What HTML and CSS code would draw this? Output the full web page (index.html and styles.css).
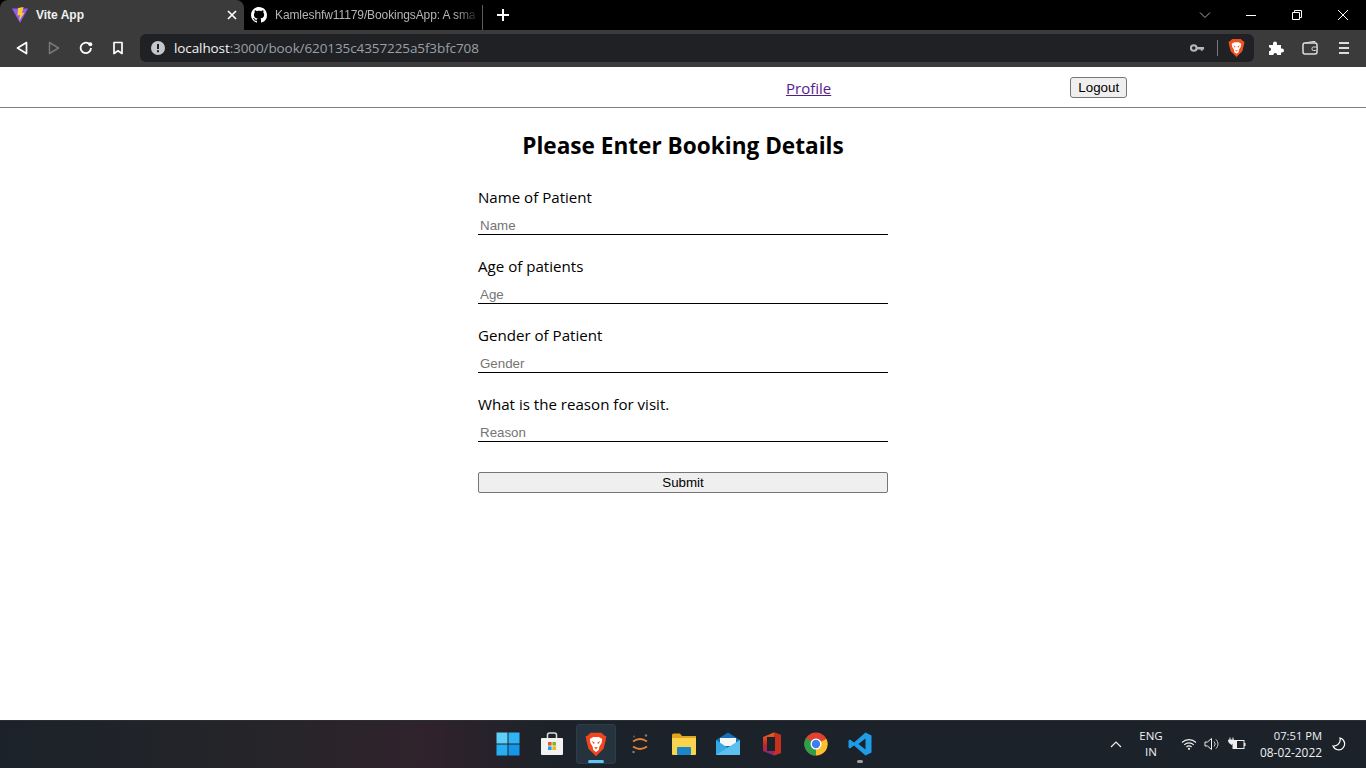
FILE: index.html
```html
<!doctype html>
<html lang="en-US">
  <head>
    <meta charset="utf-8" />
    <title>Vite App</title>
    <link rel="stylesheet" href="styles.css">
  </head>
  <body>
    <div class="tabstrip">
      <div class="tab tab-active">
        <svg class="favicon" viewBox="0 0 16 16"><path d="M0 1.5 L16 1.5 L8 16 Z" fill="#8f5cf5"/><path d="M6 1 L11.5 0 L10 6 L12.5 5.5 L7 14 L8 8 L5.5 8.5 Z" fill="#fdc92e"/></svg>
        <span class="tab-title">Vite App</span>
        <svg class="tab-close" viewBox="0 0 10 10"><path d="M1 1 L9 9 M9 1 L1 9" stroke="#fff" stroke-width="1.7"/></svg>
      </div>
      <div class="tab tab-other">
        <svg class="favicon" viewBox="0 0 16 16"><path fill="#fff" d="M8 0C3.58 0 0 3.58 0 8c0 3.54 2.29 6.53 5.47 7.59.4.07.55-.17.55-.38 0-.19-.01-.82-.01-1.49-2.01.37-2.53-.49-2.69-.94-.09-.23-.48-.94-.82-1.13-.28-.15-.68-.52-.01-.53.63-.01 1.08.58 1.23.82.72 1.21 1.87.87 2.33.66.07-.52.28-.87.51-1.07-1.78-.2-3.64-.89-3.64-3.95 0-.87.31-1.59.82-2.15-.08-.2-.36-1.02.08-2.12 0 0 .67-.21 2.2.82.64-.18 1.32-.27 2-.27s1.36.09 2 .27c1.53-1.04 2.2-.82 2.2-.82.44 1.1.16 1.92.08 2.12.51.56.82 1.27.82 2.15 0 3.07-1.87 3.75-3.65 3.95.29.25.54.73.54 1.48 0 1.07-.01 1.93-.01 2.2 0 .21.15.46.55.38A8 8 0 0 0 16 8c0-4.42-3.58-8-8-8z"/></svg>
        <span class="tab-title tab-title-dim">Kamleshfw11179/BookingsApp: A sma</span>
      </div>
      <svg class="new-tab" viewBox="0 0 14 14"><path d="M7 1 V13 M1 7 H13" stroke="#fff" stroke-width="2"/></svg>
      <div class="window-controls">
        <svg viewBox="0 0 12 12"><path d="M1 3.5 L6 8.5 L11 3.5" fill="none" stroke="#aaa"/></svg>
        <svg viewBox="0 0 12 12"><path d="M1 6.5 H11" stroke="#fff"/></svg>
        <svg viewBox="0 0 12 12"><path d="M1.5 3.5 H8.5 V10.5 H1.5 Z M3.5 3.5 V1.5 H10.5 V8.5 H8.5" fill="none" stroke="#fff"/></svg>
        <svg viewBox="0 0 12 12"><path d="M1 1 L11 11 M11 1 L1 11" stroke="#fff"/></svg>
      </div>
    </div>

    <div class="toolbar">
      <div class="nav-buttons">
        <svg viewBox="0 0 14 14"><path d="M11.5 1.5 L2.5 7 L11.5 12.5 Z" fill="none" stroke="#fff" stroke-width="1.7" stroke-linejoin="round"/></svg>
        <svg viewBox="0 0 14 14"><path d="M2.5 1.5 L11.5 7 L2.5 12.5 Z" fill="none" stroke="#777" stroke-width="1.5" stroke-linejoin="round"/></svg>
        <svg viewBox="0 0 14 14"><path d="M12 7 A5.2 5.2 0 1 1 10 2.8" fill="none" stroke="#fff" stroke-width="1.8"/><circle cx="11.3" cy="3.2" r="2" fill="#fff"/></svg>
        <svg viewBox="0 0 14 14"><path d="M3 1.5 H11 V12.5 L7 9.8 L3 12.5 Z" fill="none" stroke="#fff" stroke-width="1.7" stroke-linejoin="round"/></svg>
      </div>
      <div class="omnibox">
        <svg class="omni-info" viewBox="0 0 14 14"><circle cx="7" cy="7" r="7" fill="#c4c7c9"/><rect x="6" y="3" width="2" height="5" fill="#202124"/><rect x="6" y="9.2" width="2" height="2" fill="#202124"/></svg>
        <span class="url"><span class="url-host">localhost</span>:3000/book/620135c4357225a5f3bfc708</span>
        <svg class="omni-key" viewBox="0 0 16 10"><circle cx="4" cy="5" r="3" fill="none" stroke="#b5b8ba" stroke-width="2.2"/><path d="M7 4 H15 V6.5 H13.5 V8 H11.5 V6.5 H7 Z" fill="#b5b8ba"/></svg>
        <span class="omni-sep"></span>
        <svg class="brave-icon omni-brave" viewBox="0 0 16 18"><path d="M4 0.5 H12 L14 2.5 L15.5 3 L15 6 L13.5 12 L8 17.5 L2.5 12 L1 6 L0.5 3 L2 2.5 Z" fill="#f0501e"/><path d="M3.5 5 L6 3.6 H10 L12.5 5 L12 8 L10.5 10.5 L10 13 L8 14.5 L6 13 L5.5 10.5 L4 8 Z" fill="#fff"/><path d="M4.8 6.5 L7 7.5 L6.5 8.8 Z M11.2 6.5 L9 7.5 L9.5 8.8 Z M6.6 11 H9.4 L8 12.4 Z" fill="#f0501e"/></svg>
      </div>
      <div class="extensions">
        <svg viewBox="0 0 16 16"><path d="M1 5 H5 V3.5 A2 2 0 0 1 9 3.5 V5 H13 V8.5 H14 A2 2 0 0 1 14 12.5 H13 V15 H9 V14 A2 2 0 0 0 5.5 14 V15 H1 V11 H2 A2 2 0 0 0 2 7.5 H1 Z" fill="#fff"/></svg>
        <svg viewBox="0 0 16 16"><rect x="1" y="3" width="14" height="11" rx="2" fill="none" stroke="#ddd" stroke-width="1.5"/><path d="M3 3 L11 1.5 H13 V3" fill="none" stroke="#ddd"/><rect x="10" y="7" width="5" height="3.5" rx="1.5" fill="#3b3b3b" stroke="#ddd"/></svg>
        <svg viewBox="0 0 16 16"><path d="M3 3 H13 M3 8 H13 M3 13 H13" stroke="#ddd" stroke-width="2"/></svg>
      </div>
    </div>

    <header class="site-nav">
      <a class="profile-link" href="#">Profile</a>
      <button class="logout-btn">Logout</button>
    </header>

    <main class="page">
      <h2 class="form-title">Please Enter Booking Details</h2>
      <form class="booking-form">
        <label class="field"><span class="field-label">Name of Patient</span><input class="field-input" placeholder="Name"></label>
        <label class="field"><span class="field-label">Age of patients</span><input class="field-input" placeholder="Age"></label>
        <label class="field"><span class="field-label">Gender of Patient</span><input class="field-input" placeholder="Gender"></label>
        <label class="field"><span class="field-label">What is the reason for visit.</span><input class="field-input" placeholder="Reason"></label>
        <button class="submit-btn" type="button">Submit</button>
      </form>
    </main>

    <footer class="taskbar">
      <div class="task-icons">
        <div class="task-icon">
          <svg viewBox="0 0 24 24"><rect x="0.5" y="0.5" width="11" height="11" fill="#5fd0fb"/><rect x="12.5" y="0.5" width="11" height="11" fill="#2fb5f5"/><rect x="0.5" y="12.5" width="11" height="11" fill="#25aef2"/><rect x="12.5" y="12.5" width="11" height="11" fill="#1596e8"/></svg>
        </div>
        <div class="task-icon">
          <svg viewBox="0 0 24 24"><path d="M7.5 6 V3 A2 2 0 0 1 9.5 1 H14.5 A2 2 0 0 1 16.5 3 V6" fill="none" stroke="#ddd" stroke-width="1.5"/><rect x="1" y="6" width="22" height="17" rx="1" fill="#f2f2f2"/><rect x="8" y="10" width="3.6" height="3.6" fill="#e8532a"/><rect x="12.4" y="10" width="3.6" height="3.6" fill="#7db82b"/><rect x="8" y="14.4" width="3.6" height="3.6" fill="#1f9fe6"/><rect x="12.4" y="14.4" width="3.6" height="3.6" fill="#f7b60f"/></svg>
        </div>
        <div class="task-icon task-icon-active">
          <svg class="brave-icon" viewBox="0 0 16 18"><path d="M4 0.5 H12 L14 2.5 L15.5 3 L15 6 L13.5 12 L8 17.5 L2.5 12 L1 6 L0.5 3 L2 2.5 Z" fill="#f0451e"/><path d="M3.5 5 L6 3.6 H10 L12.5 5 L12 8 L10.5 10.5 L10 13 L8 14.5 L6 13 L5.5 10.5 L4 8 Z" fill="#fff"/><path d="M4.8 6.5 L7 7.5 L6.5 8.8 Z M11.2 6.5 L9 7.5 L9.5 8.8 Z M6.6 11 H9.4 L8 12.4 Z" fill="#f0451e"/></svg>
          <span class="task-pill"></span>
        </div>
        <div class="task-icon">
          <svg viewBox="0 0 24 24"><path d="M5 9.5 Q12 4.5 19 9.5" fill="none" stroke="#e9812f" stroke-width="1.8"/><path d="M5 14.5 Q12 19.5 19 14.5" fill="none" stroke="#e9812f" stroke-width="1.8"/><circle cx="18" cy="3.5" r="1.3" fill="#777"/><circle cx="5.5" cy="20" r="1.3" fill="#777"/><circle cx="6" cy="4.5" r="0.9" fill="#666"/></svg>
        </div>
        <div class="task-icon">
          <svg viewBox="0 0 24 24"><path d="M0 3 A1.5 1.5 0 0 1 1.5 1.5 H8 L10 4 H24 V10 H0 Z" fill="#e3a51c"/><rect x="0" y="6" width="24" height="17" rx="1" fill="#fbd44f"/><rect x="5" y="15" width="14" height="8" rx="1" fill="#1a86c8"/></svg>
        </div>
        <div class="task-icon">
          <svg viewBox="0 0 24 24"><path d="M0 8 L12 0.5 L24 8 V23 H0 Z" fill="#1570b8"/><path d="M4 6 H20 V14 H4 Z" fill="#f4f6f8"/><path d="M0 8 L12 16 L24 8 V23 H0 Z" fill="#35a8e6"/><path d="M24 8 V23 H0 Z" fill="#5cc0ee"/></svg>
        </div>
        <div class="task-icon">
          <svg viewBox="0 0 24 24"><defs><linearGradient id="officeGrad" x1="0" y1="0" x2="0" y2="1"><stop offset="0" stop-color="#e8661e"/><stop offset="0.55" stop-color="#c9222a"/><stop offset="1" stop-color="#7d2a8c"/></linearGradient></defs><path d="M3 5 L14 0.5 L21 3 V21 L14 23.5 L3 19 Z" fill="url(#officeGrad)"/><path d="M14 0.5 L21 3 V21 L14 23.5 Z" fill="#c8301e"/><rect x="7" y="5" width="8" height="14" fill="#1b2229"/></svg>
        </div>
        <div class="task-icon">
          <svg viewBox="0 0 24 24"><circle cx="12" cy="12" r="11.5" fill="#e0422f"/><path d="M12 12 L22.5 7 A11.5 11.5 0 0 1 12 23.5 Z" fill="#fbc02d"/><path d="M12 12 L12 23.5 A11.5 11.5 0 0 1 2 6 Z" fill="#2f9e49"/><circle cx="12" cy="12" r="5.5" fill="#fff"/><circle cx="12" cy="12" r="4.2" fill="#3d80ec"/></svg>
        </div>
        <div class="task-icon">
          <svg viewBox="0 0 24 24"><path d="M17.5 0.5 L23.5 3.5 V20.5 L17.5 23.5 L6 13.5 L2 16.5 L0.5 15.5 V8.5 L2 7.5 L6 10.5 Z M17.5 6.5 L10.5 12 L17.5 17.5 Z" fill="#1f9ce6" fill-rule="evenodd"/></svg>
          <span class="task-dot"></span>
        </div>
      </div>
      <div class="tray">
        <svg class="tray-chevron" viewBox="0 0 12 8"><path d="M1 7 L6 2 L11 7" fill="none" stroke="#eee" stroke-width="1.2"/></svg>
        <div class="tray-lang"><span>ENG</span><span>IN</span></div>
        <svg class="tray-wifi" viewBox="0 0 16 12"><path d="M1 4.5 A10 10 0 0 1 15 4.5 M3.2 6.8 A7 7 0 0 1 12.8 6.8 M5.4 9 A3.6 3.6 0 0 1 10.6 9" fill="none" stroke="#eee" stroke-width="1.1"/><circle cx="8" cy="10.8" r="1.1" fill="#eee"/></svg>
        <svg class="tray-volume" viewBox="0 0 16 14"><path d="M1 5 H3.5 L7.5 1.5 V12.5 L3.5 9 H1 Z" fill="none" stroke="#eee"/><path d="M10 4.5 A3.5 3.5 0 0 1 10 9.5 M12 2.5 A6 6 0 0 1 12 11.5" fill="none" stroke="#ccc"/></svg>
        <svg class="tray-battery" viewBox="0 0 18 14"><rect x="5" y="3.5" width="11" height="8" fill="none" stroke="#eee"/><rect x="16" y="6" width="1.5" height="3" fill="#eee"/><rect x="5" y="3.5" width="4" height="8" fill="#eee"/><path d="M2 0.5 V3 M5 0.5 V3 M0.5 3 H6 V5.5 L3.5 7.5 L1 5.5 Z" fill="#eee" stroke="#eee"/></svg>
        <div class="tray-clock"><span class="clock-time">07:51 PM</span><span>08-02-2022</span></div>
        <svg class="tray-moon" viewBox="0 0 14 14"><path d="M8 1 A6 6 0 1 1 1 9 A6.5 6.5 0 0 0 8 1 Z" fill="none" stroke="#fff" stroke-width="1.2"/></svg>
      </div>
    </footer>
  </body>
</html>
```

FILE: styles.css
```css
* {
	box-sizing: border-box;
}

html, body {
	height: 100%;
}

body {
	margin: 0;
	display: flex;
	flex-direction: column;
	overflow: hidden;
	background: #fff;
	font-family: "Liberation Sans", Arial, sans-serif;
}

svg {
	display: block;
	flex: none;
}

/* browser chrome */
.tabstrip {
	height: 30px;
	flex: none;
	display: flex;
	align-items: center;
	background: #000;
}

.tab {
	width: 239px;
	height: 30px;
	display: flex;
	align-items: center;
	padding-left: 7px;
}

.tab-active {
	width: 244px;
	padding-left: 12px;
	background: #3b3b3b;
	border-radius: 8px 8px 0 0;
}

.favicon {
	width: 16px;
	height: 16px;
}

.tab-title {
	flex: 1;
	margin-left: 8px;
	font-size: 12px;
	font-weight: bold;
	color: #f1f1f1;
	white-space: nowrap;
	overflow: hidden;
}

.tab-other {
	position: relative;
}

/* divider after the inactive tab */
.tab-other::after {
	content: "";
	position: absolute;
	right: 0;
	top: 5px;
	width: 1px;
	height: 25px;
	background: #5c5c5c;
}

.tab-title-dim {
	flex: none;
	width: 205px;
	font-weight: normal;
	color: #b4b4b4;
	letter-spacing: -0.1px;
	-webkit-mask-image: linear-gradient(90deg, #000 88%, transparent 100%);
	mask-image: linear-gradient(90deg, #000 88%, transparent 100%);
}

.tab-close {
	width: 10px;
	height: 10px;
	margin-right: 7px;
}

.new-tab {
	width: 14px;
	height: 14px;
	margin-left: 13px;
}

.window-controls {
	margin-left: auto;
	display: flex;
	gap: 34px;
	padding-right: 17px;
}

.window-controls svg {
	width: 12px;
	height: 12px;
}

.toolbar {
	height: 37px;
	flex: none;
	display: flex;
	align-items: center;
	padding-bottom: 1px;
	background: #3b3b3b;
}

.nav-buttons {
	width: 140px;
	display: flex;
	gap: 18px;
	padding-left: 15px;
}

.nav-buttons svg {
	width: 14px;
	height: 14px;
}

.omnibox {
	width: 1114px;
	height: 28px;
	display: flex;
	align-items: center;
	padding: 0 9px 0 11px;
	background: #202124;
	border-radius: 6px;
}

.omni-info {
	width: 14px;
	height: 14px;
}

.url {
	margin-left: 9px;
	font-family: "Open Sans", sans-serif;
	font-size: 13.5px;
	color: #9aa0a6;
	letter-spacing: -0.1px;
}

.url-host {
	color: #f1f3f4;
}

.omni-key {
	width: 15px;
	height: 10px;
	margin-left: auto;
}

.omni-sep {
	width: 1px;
	height: 16px;
	margin: 0 10px 0 12px;
	background: #77797c;
}

.omni-brave {
	width: 17px;
	height: 20px;
}

.extensions {
	display: flex;
	gap: 18px;
	padding-left: 14px;
}

.extensions svg {
	width: 16px;
	height: 16px;
}

/* site nav */
.site-nav {
	height: 41px;
	flex: none;
	display: flex;
	align-items: center;
	padding-left: 786px;
	border-bottom: 1px solid #808080;
}

.profile-link {
	margin-top: 2px;
	font-family: "Open Sans", sans-serif;
	font-size: 15px;
	color: #551a8b;
}

.logout-btn {
	width: 57px;
	height: 21px;
	margin-left: 239px;
	padding: 0;
	font-family: "Liberation Sans", Arial, sans-serif;
	font-size: 13.33px;
	color: #000;
	background: #efefef;
	border: 1px solid #767676;
	border-radius: 3px;
}

/* form */
.page {
	flex: 1;
	display: flex;
	flex-direction: column;
	align-items: center;
}

.form-title {
	margin: 21px 0 0;
	font-family: "Open Sans", sans-serif;
	font-size: 22.6px;
	line-height: 33px;
	font-weight: bold;
	color: #000;
}

.booking-form {
	width: 410px;
	margin-top: 22px;
	display: flex;
	flex-direction: column;
}

.field {
	height: 69px;
	display: flex;
	flex-direction: column;
}

.field-label {
	font-family: "Open Sans", sans-serif;
	font-size: 15.1px;
	line-height: 26px;
	color: #000;
}

.field-input {
	width: 100%;
	height: 21px;
	margin-top: 4px;
	padding: 3px 2px 0;
	font-family: "Liberation Sans", Arial, sans-serif;
	font-size: 13.33px;
	border: 0;
	border-bottom: 1px solid #000;
	outline: none;
}

.field-input::placeholder {
	color: #757575;
}

.submit-btn {
	height: 21px;
	margin-top: 12px;
	padding: 0;
	font-family: "Liberation Sans", Arial, sans-serif;
	font-size: 13.33px;
	color: #000;
	background: #efefef;
	border: 1px solid #767676;
	border-radius: 2px;
}

/* windows taskbar */
.taskbar {
	height: 48px;
	flex: none;
	display: flex;
	align-items: center;
	padding-left: 486px;
	background: linear-gradient(90deg, #1b2229 0, #262529 270px, #30222c 430px, #1b2229 560px, #1b2229 100%);
	box-shadow: inset 0 1px 0 #2b2f33;
}

.task-icons {
	display: flex;
}

.task-icon {
	position: relative;
	width: 44px;
	height: 40px;
	display: flex;
	align-items: center;
	justify-content: center;
}

.task-icon svg {
	width: 24px;
	height: 24px;
}

.task-icon .brave-icon {
	width: 22px;
	height: 25px;
}

.task-icon-active {
	width: 40px;
	margin: 0 2px;
	background: #25333e;
	border-radius: 4px;
	box-shadow: inset 0 0 0 1px #2f3c47;
}

.task-pill {
	position: absolute;
	left: 12px;
	bottom: 1px;
	width: 16px;
	height: 3px;
	background: #5ec5f5;
	border-radius: 2px;
}

.task-dot {
	position: absolute;
	left: 19px;
	bottom: 1px;
	width: 6px;
	height: 3px;
	background: #9aa0a6;
	border-radius: 2px;
}

.tray {
	margin-left: auto;
	display: flex;
	align-items: center;
	padding-right: 20px;
	font-family: "Open Sans", sans-serif;
	font-size: 11.5px;
	color: #f1f1f1;
}

.tray-chevron {
	width: 12px;
	height: 8px;
}

.tray-lang {
	width: 30px;
	margin-left: 14px;
	display: flex;
	flex-direction: column;
	align-items: center;
	line-height: 16px;
}

.tray-wifi {
	width: 16px;
	height: 12px;
	margin-left: 15px;
}

.tray-volume {
	width: 16px;
	height: 14px;
	margin-left: 7px;
}

.tray-battery {
	width: 18px;
	height: 14px;
	margin-left: 8px;
}

.tray-clock {
	width: 76px;
	display: flex;
	flex-direction: column;
	align-items: flex-end;
	font-size: 11.9px;
	line-height: 16px;
}

.clock-time {
	font-size: 11.2px;
}

.tray-moon {
	width: 14px;
	height: 14px;
	margin-left: 10px;
}
```
